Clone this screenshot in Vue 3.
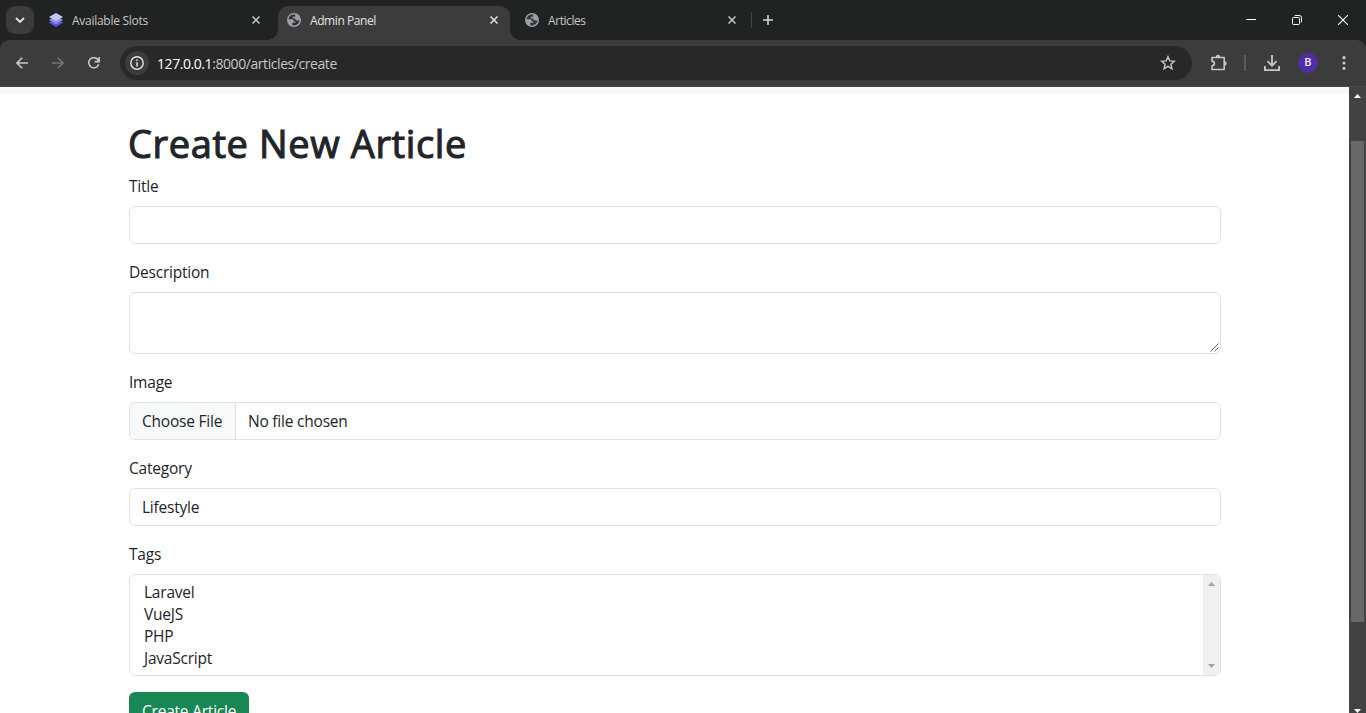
<script setup>
const tabs = [
  { title: 'Available Slots', icon: 'layers', cls: 'tab-a' },
  { title: 'Admin Panel', icon: 'globe', cls: 'tab-b active' },
  { title: 'Articles', icon: 'globe', cls: 'tab-c' },
]
const tags = ['Laravel', 'VueJS', 'PHP', 'JavaScript']
</script>

<template>
  <div class="window">
    <header class="strip">
      <button class="search-tabs"><svg width="10" height="6" viewBox="0 0 10 6"><path d="M1 1l4 4 4-4" fill="none" stroke="#e3e3e3" stroke-width="1.8" /></svg></button>
      <div v-for="t in tabs" :key="t.title" class="tab" :class="t.cls">
        <svg v-if="t.icon === 'layers'" class="fav" viewBox="0 0 14 14">
          <path d="M0 9.8L7 6l7 3.8L7 14z" fill="#5b50ee" />
          <path d="M0 7L7 3l7 4-7 4.2z" fill="#8d88f6" />
          <path d="M0 4L7 0l7 4-7 4.2z" fill="#c5c4fc" />
        </svg>
        <svg v-else class="fav" viewBox="0 0 14 14">
          <circle cx="7" cy="7" r="7" fill="#9aa0a6" />
          <path d="M8.200 1.500C4.700.9 2 3 1.500 6.200h3.400c1.100 0 1.800.6 1.800 1.500v.7h1.700v1.300H5.300v2.500c3.700.9 6.800-1.500 7.100-4.700H10c-1 0-1.700-.5-1.700-1.400v-.6H5.700V3.700h2.500z" fill="#303236" />
        </svg>
        <span class="tab-title">{{ t.title }}</span>
        <svg class="close" width="8" height="8" viewBox="0 0 8 8"><path d="M.5.5l7 7M7.500.5l-7 7" stroke="currentColor" stroke-width="1.5" /></svg>
      </div>
      <i class="strip-line"></i>
      <svg class="plus" width="10" height="10" viewBox="0 0 10 10"><path d="M5 0v10M0 5h10" stroke="#d6d6d6" stroke-width="1.6" /></svg>
      <div class="controls">
        <svg width="10" height="10" viewBox="0 0 10 10"><path d="M0 4.500h10" stroke="#fff" /></svg>
        <svg width="10" height="10" viewBox="0 0 10 10" fill="none" stroke="#fff"><rect x=".5" y="2.500" width="7" height="7" rx="1" /><path d="M2.500.9Q3 .5 4 .5h3.500Q9.500.5 9.500 2.500V6q0 1-.4 1.500" /></svg>
        <svg width="10" height="10" viewBox="0 0 10 10"><path d="M0 0l10 10M10 0L0 10" stroke="#fff" stroke-width="1.1" /></svg>
      </div>
    </header>

    <div class="toolbar">
      <svg class="nav-icon back" width="12" height="12" viewBox="0 0 12 12" fill="none" stroke="#c7c7c7" stroke-width="1.6"><path d="M12 6H1.200M6.200.8L1 6l5.200 5.200" /></svg>
      <svg class="nav-icon fwd" width="12" height="12" viewBox="0 0 12 12" fill="none" stroke="#757575" stroke-width="1.6"><path d="M0 6h10.800M5.800.8L11 6l-5.200 5.200" /></svg>
      <svg class="nav-icon reload" width="12" height="12" viewBox="0 0 12 12" fill="none" stroke="#c7c7c7" stroke-width="1.6"><path d="M10.700 7.300A5.100 5.100 0 1 1 10 2.700L11 4.200M11.200 0v4.600H6.600" /></svg>
      <div class="address">
        <span class="info"><svg width="14" height="14" viewBox="0 0 14 14"><circle cx="7" cy="7" r="6.200" fill="none" stroke="#e3e3e3" stroke-width="1.4" /><path d="M7 6.200v4.200M7 3.500v1.500" stroke="#e3e3e3" stroke-width="1.5" /></svg></span>
        <span class="url"><b>127.0.0.1</b>:8000/articles/create</span>
        <svg class="star" width="16" height="16" viewBox="0 0 16 16"><path d="M8 1.700l1.800 4.200 4.600.4-3.500 3 1.100 4.500L8 11.400l-4 2.400 1.100-4.500-3.500-3 4.600-.4z" fill="none" stroke="#c7c7c7" stroke-width="1.400" /></svg>
      </div>
      <svg class="puzzle" width="18" height="18" viewBox="0 0 18 18"><path d="M2 3.500h12.200V15.500H2v-3.600c3.200-.4 3.200-4.400 0-4.800z" fill="none" stroke="#c7c7c7" stroke-width="1.600" stroke-linejoin="round" /><path d="M5.800 3a2.200 2.200 0 0 1 4.400 0zM14.500 7.200a2.200 2.200 0 0 1 0 4.400z" fill="#c7c7c7" /></svg>
      <i class="tool-line"></i>
      <svg class="download" width="16" height="16" viewBox="0 0 16 16" fill="none" stroke="#c7c7c7" stroke-width="1.800"><path d="M8 0v10.500M3.500 6.200L8 10.700l4.500-4.500M.9 11v4.100h14.200V11" /></svg>
      <span class="avatar">B</span>
      <svg class="dots" width="4" height="14" viewBox="0 0 4 14" fill="#c7c7c7"><circle cx="2" cy="1.700" r="1.600" /><circle cx="2" cy="7" r="1.600" /><circle cx="2" cy="12.300" r="1.600" /></svg>
    </div>

    <div class="viewport">
      <main class="page">
        <div class="navbar-edge"></div>
        <div class="container">
          <h1>Create New Article</h1>
          <div class="group">
            <label>Title</label>
            <div class="control"></div>
          </div>
          <div class="group">
            <label>Description</label>
            <div class="control area">
              <svg class="grip" width="9" height="9" viewBox="0 0 9 9"><path d="M.5 8.500l8-8M4.500 8.500l4-4" stroke="#55555c" stroke-width=".9" /></svg>
            </div>
          </div>
          <div class="group">
            <label>Image</label>
            <div class="control file"><span class="choose">Choose File</span><span class="none">No file chosen</span></div>
          </div>
          <div class="group">
            <label>Category</label>
            <div class="control pad">Lifestyle</div>
          </div>
          <div class="group">
            <label>Tags</label>
            <div class="control list">
              <ul><li v-for="t in tags" :key="t">{{ t }}</li></ul>
              <div class="mini-scroll">
                <svg width="7" height="4" viewBox="0 0 7 4"><path d="M0 4L3.500 0 7 4z" fill="#a3a3a3" /></svg>
                <svg width="7" height="4" viewBox="0 0 7 4"><path d="M0 0h7L3.500 4z" fill="#a3a3a3" /></svg>
              </div>
            </div>
          </div>
          <button class="submit">Create Article</button>
        </div>
      </main>
      <aside class="scrollbar">
        <svg width="7" height="4" viewBox="0 0 7 4"><path d="M0 4L3.500 0 7 4z" fill="#fff" /></svg>
        <i class="thumb"></i>
        <svg class="down" width="7" height="4" viewBox="0 0 7 4"><path d="M0 0h7L3.500 4z" fill="#fff" /></svg>
      </aside>
    </div>
  </div>
</template>

<style>
body { margin: 0; overflow: hidden; }
</style>

<style scoped>
* { box-sizing: border-box; }
svg { display: block; flex: none; }
button { border: 0; padding: 0; font: inherit; letter-spacing: inherit; }
.window { width: 1366px; height: 713px; overflow: hidden; display: flex; flex-direction: column; background: #202322; font-family: "Open Sans", "Noto Sans", sans-serif; }
.strip { height: 40px; flex: none; display: flex; align-items: flex-start; background: #202322; padding-left: 6px; }
.search-tabs { width: 28px; height: 28px; margin-top: 6px; border-radius: 9px; background: #3c3c3c; display: grid; place-items: center; }
.tab { height: 34px; margin-top: 6px; display: flex; align-items: center; position: relative; padding: 0 12px 6px 9px; color: #c7c7c7; font-size: 12px; letter-spacing: -.42px; }
.tab-a { width: 238px; margin-left: 6px; padding-right: 18px; letter-spacing: -.27px; }
.tab-b { width: 232px; }
.tab-c { width: 241px; padding: 0 15px 6px 15px; }
.active { background: #3c3c3c; border-radius: 10px 10px 0 0; color: #e3e3e3; }
.active::before, .active::after { content: ""; position: absolute; bottom: 0; width: 10px; height: 10px; }
.active::before { left: -10px; background: radial-gradient(circle at 0 0, transparent 9.500px, #3c3c3c 10px); }
.active::after { right: -10px; background: radial-gradient(circle at 100% 0, transparent 9.500px, #3c3c3c 10px); }
.fav { width: 14px; height: 14px; margin-right: 9px; }
.tab-title { flex: 1; white-space: nowrap; }
.strip-line { width: 1px; height: 16px; margin-top: 12px; background: #464847; }
.plus { margin: 15px 0 0 11px; }
.controls { margin: 15px 18px 0 auto; display: flex; gap: 36px; }
.toolbar { height: 47px; flex: none; display: flex; align-items: center; background: #3c3c3c; border-radius: 9px 9px 0 0; border-bottom: 1px solid #484848; padding: 0 20px 0 16px; }
.fwd, .reload { margin-left: 24px; }
.address { width: 1072px; height: 34px; margin-left: 20px; border-radius: 17px; background: #282828; display: flex; align-items: center; padding: 0 16px 0 5px; }
.info { width: 24px; height: 24px; border-radius: 50%; background: #3c3c3c; display: grid; place-items: center; }
.url { flex: 1; margin-left: 8px; font-size: 14px; color: #c7c7c7; letter-spacing: -.43px; white-space: nowrap; }
.url b { font-weight: 400; color: #fff; }
.puzzle { margin-left: 18px; }
.tool-line { width: 2px; height: 16px; margin-left: 16px; background: #5a5a5a; }
.download { margin-left: 18px; }
.avatar { width: 20px; height: 20px; margin-left: 18px; border-radius: 50%; background: #512da8; color: #eee; font: 500 11px/20px Roboto, sans-serif; text-align: center; }
.dots { margin-left: auto; }
.viewport { height: 626px; display: flex; }
.page { flex: 1; background: #fff; overflow: hidden; color: #212529; }
.navbar-edge { height: 7px; background: #f8f9fa; }
.container { width: 1092px; margin-left: 129px; padding-top: 25px; font-size: 15.500px; letter-spacing: -.22px; }
h1 { height: 48px; margin: 0 0 7px -1px; font-size: 38px; line-height: 48px; font-weight: 400; letter-spacing: .62px; -webkit-text-stroke: 1.100px #212529; white-space: nowrap; }
.group { margin-bottom: 16px; }
label { display: block; width: max-content; height: 24px; line-height: 24px; margin-bottom: 8px; }
.control { height: 38px; border: 1px solid #dee2e6; border-radius: 6px; background: #fff; line-height: 36px; overflow: hidden; }
.area { height: 62px; display: flex; justify-content: flex-end; align-items: flex-end; padding: 0 1px 1px 0; }
.file { display: flex; }
.choose { width: 106px; padding-left: 12px; background: #f8f9fa; border-right: 1px solid #dee2e6; white-space: nowrap; }
.none { margin-left: 12px; }
.pad { padding-left: 12px; }
.list { height: 102px; display: flex; justify-content: space-between; }
ul { list-style: none; margin: 0; padding: 6px 0 0 14px; }
li { height: 22px; line-height: 22px; width: max-content; }
.mini-scroll { width: 17px; background: #f0f0f0; display: flex; flex-direction: column; justify-content: space-between; align-items: center; padding: 7px 0; }
.submit { width: 120px; height: 38px; display: flex; align-items: center; padding-left: 13px; border-radius: 6px; background: #198754; color: #fff; white-space: nowrap; }
.scrollbar { width: 17px; background: #424242; display: flex; flex-direction: column; align-items: center; padding-top: 7px; }
.thumb { width: 13px; height: 481px; margin-top: 43px; background: #686868; }
.down { margin-top: 87px; }
</style>
